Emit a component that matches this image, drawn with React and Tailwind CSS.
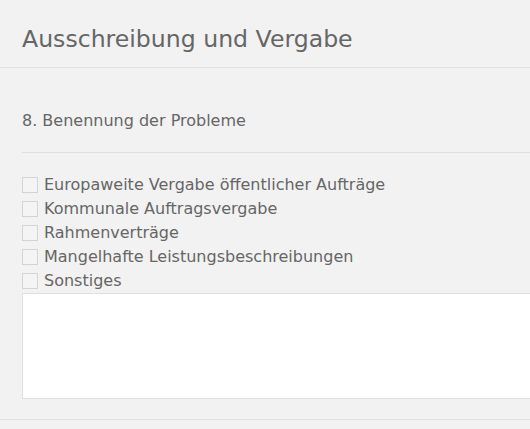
export default function App() {
  const options = [
    'Europaweite Vergabe öffentlicher Aufträge',
    'Kommunale Auftragsvergabe',
    'Rahmenverträge',
    'Mangelhafte Leistungsbeschreibungen',
    'Sonstiges',
  ]

  return (
    <div className="min-h-screen w-full bg-[#f2f2f2] text-[#666] overflow-hidden" style={{ fontFamily: '"DejaVu Sans", Verdana, sans-serif' }}>
      <div className="h-[68px] border-b border-[#e0e0e0] px-[22px] pt-[25px]">
        <h1 className="text-[23.6px] leading-[28px] text-[#666]">Ausschreibung und Vergabe</h1>
      </div>

      <div className="pl-[22px] pb-5 border-b border-[#e0e0e0]">
        <div className="h-[85px] border-b border-[#e0e0e0] pt-[42px]">
          <p className="text-[16px] leading-[22px]">8. Benennung der Probleme</p>
        </div>

        <div className="pt-[20px] flex flex-col">
          {options.map(opt => (
            <label key={opt} className="flex items-center gap-[6px] h-6 text-[16px]">
              <span className="w-4 h-4 border border-[#d3d3d3] bg-[#f4f4f4] shrink-0" />
              <span>{opt}</span>
            </label>
          ))}
        </div>

        <textarea className="block w-[calc(100%+20px)] h-[106px] bg-white border border-[#e0e0e0] outline-none resize-none" />
      </div>
    </div>
  )
}
